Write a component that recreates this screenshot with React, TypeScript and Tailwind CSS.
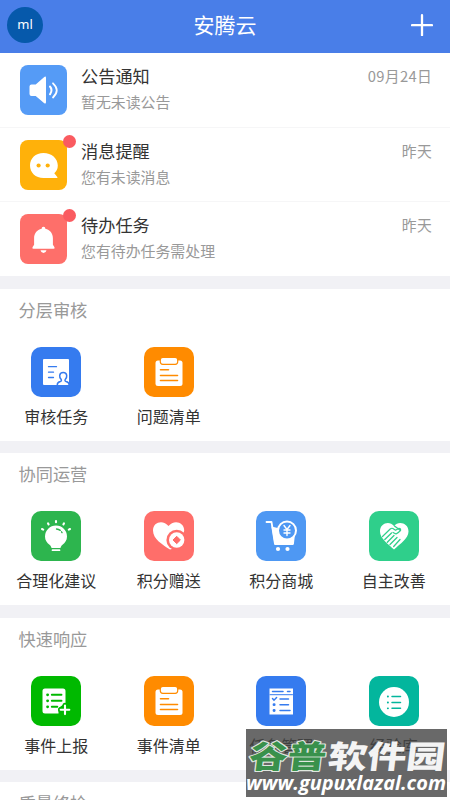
import type { ReactNode } from "react";

function SpeakerIcon() {
  return (
    <svg viewBox="0 0 47 50" className="h-full w-full" fill="none" stroke="#fff" strokeLinecap="round">
      <path d="M11.500 19.500h4.200L24 12.200q2-1.600 2 .8v24q0 2.600-2 1L15.700 31h-4.200q-2 0-2-2v-7.500q0-2 2-2z" fill="#fff" stroke="none" />
      <path d="M30 21.500q3 3.600 0 7.800" strokeWidth="2" />
      <path d="M33 18.300q7.500 7 0 14.200" strokeWidth="1.800" />
    </svg>
  );
}

function ChatIcon() {
  return (
    <svg viewBox="0 0 47 50" className="h-full w-full">
      <path d="M23.500 13C15.500 13 10 18.300 10 25.500S15.500 38 23.500 38H37q1-.3.300-1l-3-3.800q3.500-3.200 3.500-7.700C37.800 18.300 31.500 13 23.500 13z" fill="#fff" />
      <circle cx="18.600" cy="25.500" r="2.100" fill="#ffb10a" />
      <circle cx="27.700" cy="25.500" r="2.100" fill="#ffb10a" />
    </svg>
  );
}

function BellIcon() {
  return (
    <svg viewBox="0 0 47 50" className="h-full w-full" fill="#fff">
      <path d="M23.500 12.800c1.300 0 1.800.8 1.800 1.900 4.800 1 7.600 4.800 7.600 9.500v6.600l1.600 2.500q.5 1.500-1 1.500h-20q-1.500 0-1-1.500l1.600-2.500v-6.600c0-4.700 2.800-8.500 7.600-9.500 0-1.100.5-1.900 1.800-1.900z" />
      <path d="M20.500 36.300h6q-.5 2.700-3 2.700t-3-2.700z" />
    </svg>
  );
}

function ReviewIcon() {
  return (
    <svg viewBox="0 0 50 50" className="h-full w-full" fill="none" strokeLinecap="round">
      <rect x="12" y="12" width="26" height="26" rx="1" fill="#fff" />
      <path d="M17.500 19.700h8M17.500 25.200h5M17.500 30.500h5" stroke="#357bef" strokeWidth="1.300" />
      <path d="M26.300 37.800c0-2 1-2.800 3-3.300q1.600-.5.900-1.900-1.800-2-1.500-4.100c.2-2 1.500-3 3.500-3s3.300 1 3.500 3q.3 2.100-1.500 4.100-.7 1.400.9 1.900c2 .5 3 1.300 3 3.300" fill="#fff" stroke="#357bef" strokeWidth="1.500" />
    </svg>
  );
}

function ClipboardIcon() {
  return (
    <svg viewBox="0 0 50 50" className="h-full w-full" fill="none" strokeLinecap="round">
      <rect x="11.500" y="13.500" width="27" height="25.500" rx="2.500" fill="#fff" />
      <rect x="16.300" y="10.300" width="17.400" height="7" rx="2.500" fill="#fff" stroke="#ff8b00" strokeWidth="1.200" />
      <path d="M16.500 22.800h8M16.500 28.500h17M16.500 33.500h17" stroke="#ff8b00" strokeWidth="1.600" />
    </svg>
  );
}

function BulbIcon() {
  return (
    <svg viewBox="0 0 50 50" className="h-full w-full" fill="none" strokeLinecap="round">
      <path d="M25 14.500a11 11 0 0 0-11 11c0 4 2 6.200 4.500 8.200 1.300 1 1.800 2.300 2 3.300h9c.2-1 .7-2.300 2-3.300 2.500-2 4.500-4.200 4.500-8.200a11 11 0 0 0-11-11z" fill="#fff" />
      <path d="M21.500 39.200h7" stroke="#fff" strokeWidth="1.700" />
      <path d="M25 10v1.200M17 12.300l.6 1.100M33 12.300l-.6 1.100M11 18l1.200.6M39 18l-1.200.6" stroke="#fff" strokeWidth="2.100" />
      <path d="M25.500 18q4.500.4 6 4.700" stroke="#2db54e" strokeWidth="1.300" strokeDasharray="4 2 1 2" />
    </svg>
  );
}

function GiftHeartIcon() {
  return (
    <svg viewBox="0 0 50 50" className="h-full w-full">
      <path d="M26 38.500C18.500 33.700 9 28 9 19.500 9 10.500 19.500 8.500 24.500 15c5-6.500 15.700-4.500 15.700 4.700L35 36l-9 2.500z" fill="#fff" />
      <circle cx="32.700" cy="29" r="10.300" fill="#ff6e6a" />
      <circle cx="32.700" cy="29" r="7.700" fill="#fff" />
      <path d="m32.700 25.300 3.700 3.700-3.700 3.700-3.700-3.700z" fill="#ff6e6a" stroke="#ff6e6a" strokeLinejoin="round" />
    </svg>
  );
}

function CartIcon() {
  return (
    <svg viewBox="0 0 50 50" className="h-full w-full" fill="none" strokeLinecap="round" strokeLinejoin="round">
      <path d="M15.500 15.500 18.500 33h18.300l1.500-12z" fill="#fff" />
      <path d="M10.500 11h5l3.500 22H37l1-9" stroke="#fff" strokeWidth="1.800" />
      <circle cx="31" cy="19.500" r="9" fill="#4e98f3" stroke="#fff" strokeWidth="2" />
      <path d="m28 14.500 3 4 3-4M31 18.500v6M28 19h6M28 22h6" stroke="#fff" strokeWidth="1.400" />
      <circle cx="22" cy="38" r="2.100" fill="#fff" />
      <circle cx="31.500" cy="38" r="2.100" fill="#fff" />
    </svg>
  );
}

function HandshakeIcon() {
  return (
    <svg viewBox="0 0 50 50" className="h-full w-full" fill="none" strokeLinecap="round" strokeLinejoin="round">
      <path d="M25 38.500C19 33 11 27.500 11 20.500c0-8.500 9.500-11 14-5.500 4.500-5.500 14.500-3 14.500 5.500 0 7-8.500 12.500-14.500 18z" fill="#fff" />
      <path d="m13.500 25.500 7.700-7.500q1.800-1.500 3.500 0l1.800 1.200 3.500-1.900q2 0 1.500 2-1.500 2-4.500 3.700l-3-1.500" stroke="#2fcf8b" strokeWidth="1.200" />
      <path d="m22.500 22-6.700 6.500M25 24.500l-6.700 6.700M28 26.500l-7 7M31 28.500l-6.300 7M25.500 15l6 4.500" stroke="#2fcf8b" strokeWidth="1.300" />
    </svg>
  );
}

function ReportIcon() {
  return (
    <svg viewBox="0 0 50 50" className="h-full w-full" fill="none" strokeLinecap="round">
      <path d="M14 12.500h18q2.500 0 2.500 2.500v12l-7 5v5.500H14q-2.500 0-2.500-2.500V15q0-2.500 2.500-2.500z" fill="#fff" />
      <path d="M20.800 18.800h9.700M20.800 24.800h9.700M20.800 30.800h5.500" stroke="#00b900" strokeWidth="1.900" />
      <path d="M16.500 18.800h.2M16.500 24.800h.2M16.500 30.800h.2" stroke="#00b900" strokeWidth="2.700" />
      <path d="M34 29.300v9M29.500 33.800h9" stroke="#00b900" strokeWidth="5" />
      <path d="M34 29.500v8.600M29.700 33.800h8.600" stroke="#fff" strokeWidth="2.100" />
    </svg>
  );
}

function TaskListIcon() {
  return (
    <svg viewBox="0 0 50 50" className="h-full w-full" fill="none" strokeLinecap="round">
      <rect x="13.500" y="12.500" width="23.500" height="26" fill="#fff" />
      <path d="M16.500 15.500H27M31.500 15.500h2.500" stroke="#357bef" strokeWidth="1.500" />
      <path d="M14 18.700h22.500" stroke="#357bef" strokeWidth="1" />
      <path d="m16.500 22.500 1.500 1.700 2.600-2.700M24 23h8.500M24 28.700h8.500M24 34.500h10" stroke="#357bef" strokeWidth="1.500" />
      <path d="M18 28.700h.2M18 34.500h.2" stroke="#357bef" strokeWidth="2.800" />
    </svg>
  );
}

function KnowledgeIcon() {
  return (
    <svg viewBox="0 0 50 50" className="h-full w-full" fill="none" strokeLinecap="round">
      <circle cx="25" cy="26" r="15" fill="#fff" />
      <path d="M23 20.500h8.500M23 26.500h8.500M23 32.300h8.500" stroke="#03b69d" strokeWidth="1.500" />
      <path d="M18.800 20.500h.2M18.800 26.500h.2M18.800 32.300h.2" stroke="#03b69d" strokeWidth="1.800" />
    </svg>
  );
}

type Message = { title: string; detail: string; time: string; color: string; unread: boolean; icon: ReactNode };

const messages: Message[] = [
  { title: "公告通知", detail: "暂无未读公告", time: "09月24日", color: "bg-[#559bf6]", unread: false, icon: <SpeakerIcon /> },
  { title: "消息提醒", detail: "您有未读消息", time: "昨天", color: "bg-[#ffb10a]", unread: true, icon: <ChatIcon /> },
  { title: "待办任务", detail: "您有待办任务需处理", time: "昨天", color: "bg-[#fe6f6a]", unread: true, icon: <BellIcon /> },
];

type Entry = { label: string; color: string; icon: ReactNode };

const sections: { title: string; entries: Entry[] }[] = [
  {
    title: "分层审核",
    entries: [
      { label: "审核任务", color: "bg-[#357bef]", icon: <ReviewIcon /> },
      { label: "问题清单", color: "bg-[#ff8b00]", icon: <ClipboardIcon /> },
    ],
  },
  {
    title: "协同运营",
    entries: [
      { label: "合理化建议", color: "bg-[#2db54e]", icon: <BulbIcon /> },
      { label: "积分赠送", color: "bg-[#ff6e6a]", icon: <GiftHeartIcon /> },
      { label: "积分商城", color: "bg-[#4e98f3]", icon: <CartIcon /> },
      { label: "自主改善", color: "bg-[#2fcf8b]", icon: <HandshakeIcon /> },
    ],
  },
  {
    title: "快速响应",
    entries: [
      { label: "事件上报", color: "bg-[#00b900]", icon: <ReportIcon /> },
      { label: "事件清单", color: "bg-[#ff8b00]", icon: <ClipboardIcon /> },
      { label: "任务管理", color: "bg-[#357bef]", icon: <TaskListIcon /> },
      { label: "经验库", color: "bg-[#03b69d]", icon: <KnowledgeIcon /> },
    ],
  },
];

function MessageRow({ message }: { message: Message }) {
  return (
    <div className="flex h-[74.500px] border-b border-[#f6f6f7] pt-3 pr-[18px] pl-5 last:border-b-0">
      <div className={`relative h-[50px] w-[47px] shrink-0 rounded-[8px] ${message.color}`}>
        {message.icon}
        {message.unread && <span className="absolute -top-[5px] -right-[9px] size-[13px] rounded-full bg-[#fa5b60]" />}
      </div>
      <div className="ml-[14px] flex-1">
        <div className="-mt-px text-[17.200px] leading-6 text-[#333]">{message.title}</div>
        <div className="mt-[3px] text-[14.900px] leading-[22px] text-[#999]">{message.detail}</div>
      </div>
      <div className="text-[14.800px] leading-[22px] tracking-[0.02em] text-[#999]">{message.time}</div>
    </div>
  );
}

function Watermark() {
  return (
    <div className="absolute top-[729px] left-[246px] h-[68px] w-[201px] bg-[#444]/80">
      <svg viewBox="0 0 201 68" className="h-full w-full overflow-visible font-['Noto_Sans_CJK_SC',sans-serif] font-black">
        <g transform="translate(2 38.500) skewX(-7)" fontSize="31.500" strokeLinejoin="round" opacity="0.93">
          <text x="0" y="0" textLength="77" lengthAdjust="spacingAndGlyphs" fill="#36954a" stroke="#e9f1e9" strokeWidth="2.200" paintOrder="stroke">谷普</text>
          <text x="79" y="0" textLength="117" lengthAdjust="spacingAndGlyphs" fill="#fff">软件园</text>
        </g>
        <text x="0" y="61" textLength="200" lengthAdjust="spacingAndGlyphs" fill="#fff" fontSize="19" className="font-['Open_Sans',sans-serif] font-bold italic">www.gupuxlazal.com</text>
      </svg>
    </div>
  );
}

export default function App() {
  return (
    <div className="relative flex h-[800px] w-[450px] flex-col overflow-hidden bg-[#f1f1f5] font-['Noto_Sans_CJK_SC',sans-serif]">
      <header className="grid h-[53px] shrink-0 grid-cols-[1fr_auto_1fr] items-center bg-[#497ee8] px-[7px] pb-[3px] text-white">
        <div className="flex size-[36px] items-center justify-center rounded-full bg-[#0659ab] font-['Noto_Sans',sans-serif] text-[13px]">ml</div>
        <h1 className="-mt-0.5 text-center text-[21px] leading-8">安腾云</h1>
        <svg viewBox="0 0 22 22" className="mr-[10px] size-[22px] justify-self-end" stroke="#fff" strokeWidth="2.300" strokeLinecap="round">
          <path d="M11 1.200v20M1 11.200h20" />
        </svg>
      </header>
      <main className="flex flex-col">
        <div className="h-[223px] bg-white">
          {messages.map((message) => (
            <MessageRow key={message.title} message={message} />
          ))}
        </div>
        {sections.map((section) => (
          <section key={section.title} className="mt-[12.500px] h-[152px] bg-white">
            <h2 className="pt-2 pl-[18.500px] text-[17.200px] leading-[26px] text-[#999]">{section.title}</h2>
            <div className="mt-6 grid grid-cols-4">
              {section.entries.map((entry) => (
                <div key={entry.label} className="flex flex-col items-center">
                  <div className={`size-[50px] rounded-[10px] ${entry.color}`}>{entry.icon}</div>
                  <span className="mt-[7px] text-base leading-6 text-[#333]">{entry.label}</span>
                </div>
              ))}
            </div>
          </section>
        ))}
        <section className="mt-[12.500px] h-[152px] bg-white">
          <h2 className="pt-2 pl-[18.500px] text-[17.200px] leading-[26px] text-[#999]">质量终检</h2>
        </section>
      </main>
      <Watermark />
    </div>
  );
}
